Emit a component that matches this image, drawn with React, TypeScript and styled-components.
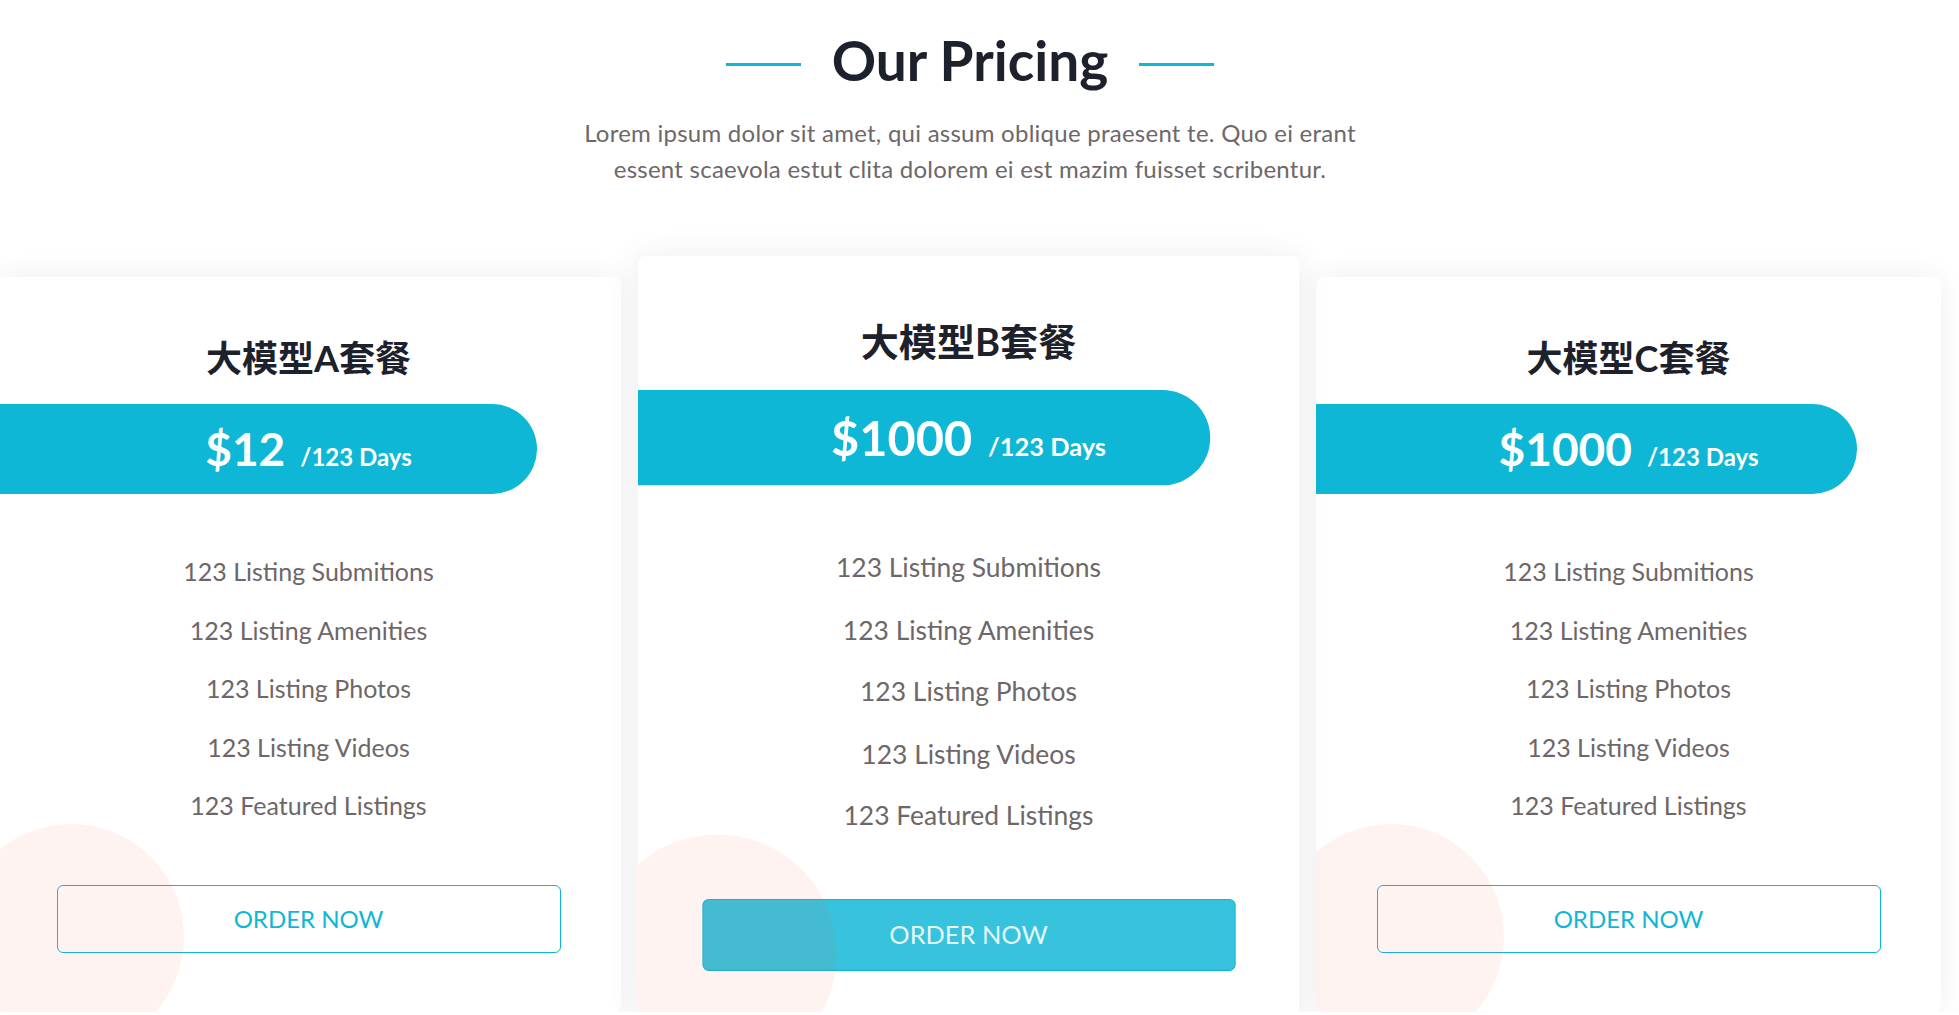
import styled, { createGlobalStyle } from 'styled-components'

const GlobalStyle = createGlobalStyle`
  html, body {
    margin: 0;
    padding: 0;
    background: #ffffff;
    overflow: hidden;
  }
  body {
    font-family: "Lato", "Noto Sans CJK SC", sans-serif;
  }
  * { box-sizing: border-box; }
`

const CYAN = '#0eb7d6'
const DARK = '#1d212b'
const GREY = '#6e6769'

const Section = styled.section`
  width: 100%;
  padding: 28px 19px 0 0;
  display: flex;
  flex-direction: column;
  align-items: center;
`

const HeadingRow = styled.div`
  display: flex;
  align-items: center;
  gap: 31px;
`

const HeadingLine = styled.span`
  display: block;
  width: 75px;
  height: 3px;
  margin-top: 9px;
  background: ${CYAN};
`

const Heading = styled.h2`
  margin: 0;
  font-family: "Lato", sans-serif;
  font-weight: 700;
  font-size: 55px;
  line-height: 64px;
  color: ${DARK};
`

const Intro = styled.p`
  margin: 23px 0 0;
  font-family: "Lato", sans-serif;
  font-size: 24px;
  letter-spacing: 0.25px;
  line-height: 36px;
  color: ${GREY};
  text-align: center;
`

const CardRow = styled.div`
  align-self: flex-start;
  display: flex;
  gap: 35px;
  margin-top: 90px;
  margin-left: -4px;
`

const Card = styled.div<{ $featured?: boolean }>`
  position: relative;
  flex: 0 0 625px;
  display: flex;
  flex-direction: column;
  align-items: center;
  overflow: hidden;
  background: #ffffff;
  border-radius: 8px;
  box-shadow: 0 0 30px rgba(20, 30, 60, 0.07);
  transform: ${p => (p.$featured ? 'scale(1.058)' : 'none')};
  z-index: ${p => (p.$featured ? 1 : 0)};
`

const PlanName = styled.h3`
  margin: 60px 0 0;
  font-family: "Lato", "Noto Sans CJK SC", sans-serif;
  font-weight: 700;
  font-size: 36px;
  line-height: 43px;
  color: ${DARK};
`

const PriceBand = styled.div`
  align-self: stretch;
  margin: 24px 84px 0 0;
  padding-left: 84px;
  height: 90px;
  border-radius: 0 45px 45px 0;
  background: ${CYAN};
  display: flex;
  align-items: center;
  justify-content: center;
`

const PriceLine = styled.div`
  display: flex;
  align-items: baseline;
  gap: 15px;
  color: #ffffff;
  font-family: "Lato", sans-serif;
  font-weight: 700;
`

const Amount = styled.span`
  font-size: 46px;
  line-height: 1;
`

const Period = styled.span`
  font-size: 24px;
  line-height: 1;
`

const Features = styled.ul`
  list-style: none;
  margin: 48px 0 0;
  padding: 0;
  text-align: center;
`

const Feature = styled.li`
  font-family: "Lato", sans-serif;
  font-size: 25px;
  line-height: 58.5px;
  color: ${GREY};
`

const OrderButton = styled.button<{ $filled?: boolean }>`
  width: 504px;
  height: 68px;
  margin: 50px 0 59px;
  border: 1px solid ${CYAN};
  border-radius: 6px;
  background: ${p => (p.$filled ? 'rgba(14, 183, 214, 0.83)' : '#ffffff')};
  color: ${p => (p.$filled ? 'rgba(255, 255, 255, 0.88)' : CYAN)};
  font-family: "Lato", sans-serif;
  font-size: 24px;
  cursor: pointer;
`

const Blob = styled.span`
  position: absolute;
  left: -38px;
  top: 547px;
  width: 226px;
  height: 226px;
  border-radius: 50%;
  background: rgba(240, 100, 80, 0.08);
  pointer-events: none;
`

const plans = [
  { name: '大模型A套餐', price: '$12' },
  { name: '大模型B套餐', price: '$1000', featured: true },
  { name: '大模型C套餐', price: '$1000' },
]

const features = [
  '123 Listing Submitions',
  '123 Listing Amenities',
  '123 Listing Photos',
  '123 Listing Videos',
  '123 Featured Listings',
]

export default function App() {
  return (
    <>
      <GlobalStyle />
      <Section>
        <HeadingRow>
          <HeadingLine />
          <Heading>Our Pricing</Heading>
          <HeadingLine />
        </HeadingRow>
        <Intro>
          Lorem ipsum dolor sit amet, qui assum oblique praesent te. Quo ei erant
          <br />
          essent scaevola estut clita dolorem ei est mazim fuisset scribentur.
        </Intro>

        <CardRow>
          {plans.map(plan => (
            <Card key={plan.name} $featured={plan.featured}>
              <PlanName>{plan.name}</PlanName>
              <PriceBand>
                <PriceLine>
                  <Amount>{plan.price}</Amount>
                  <Period>/123 Days</Period>
                </PriceLine>
              </PriceBand>
              <Features>
                {features.map(f => (
                  <Feature key={f}>{f}</Feature>
                ))}
              </Features>
              <OrderButton $filled={plan.featured}>ORDER NOW</OrderButton>
              <Blob />
            </Card>
          ))}
        </CardRow>
      </Section>
    </>
  )
}
